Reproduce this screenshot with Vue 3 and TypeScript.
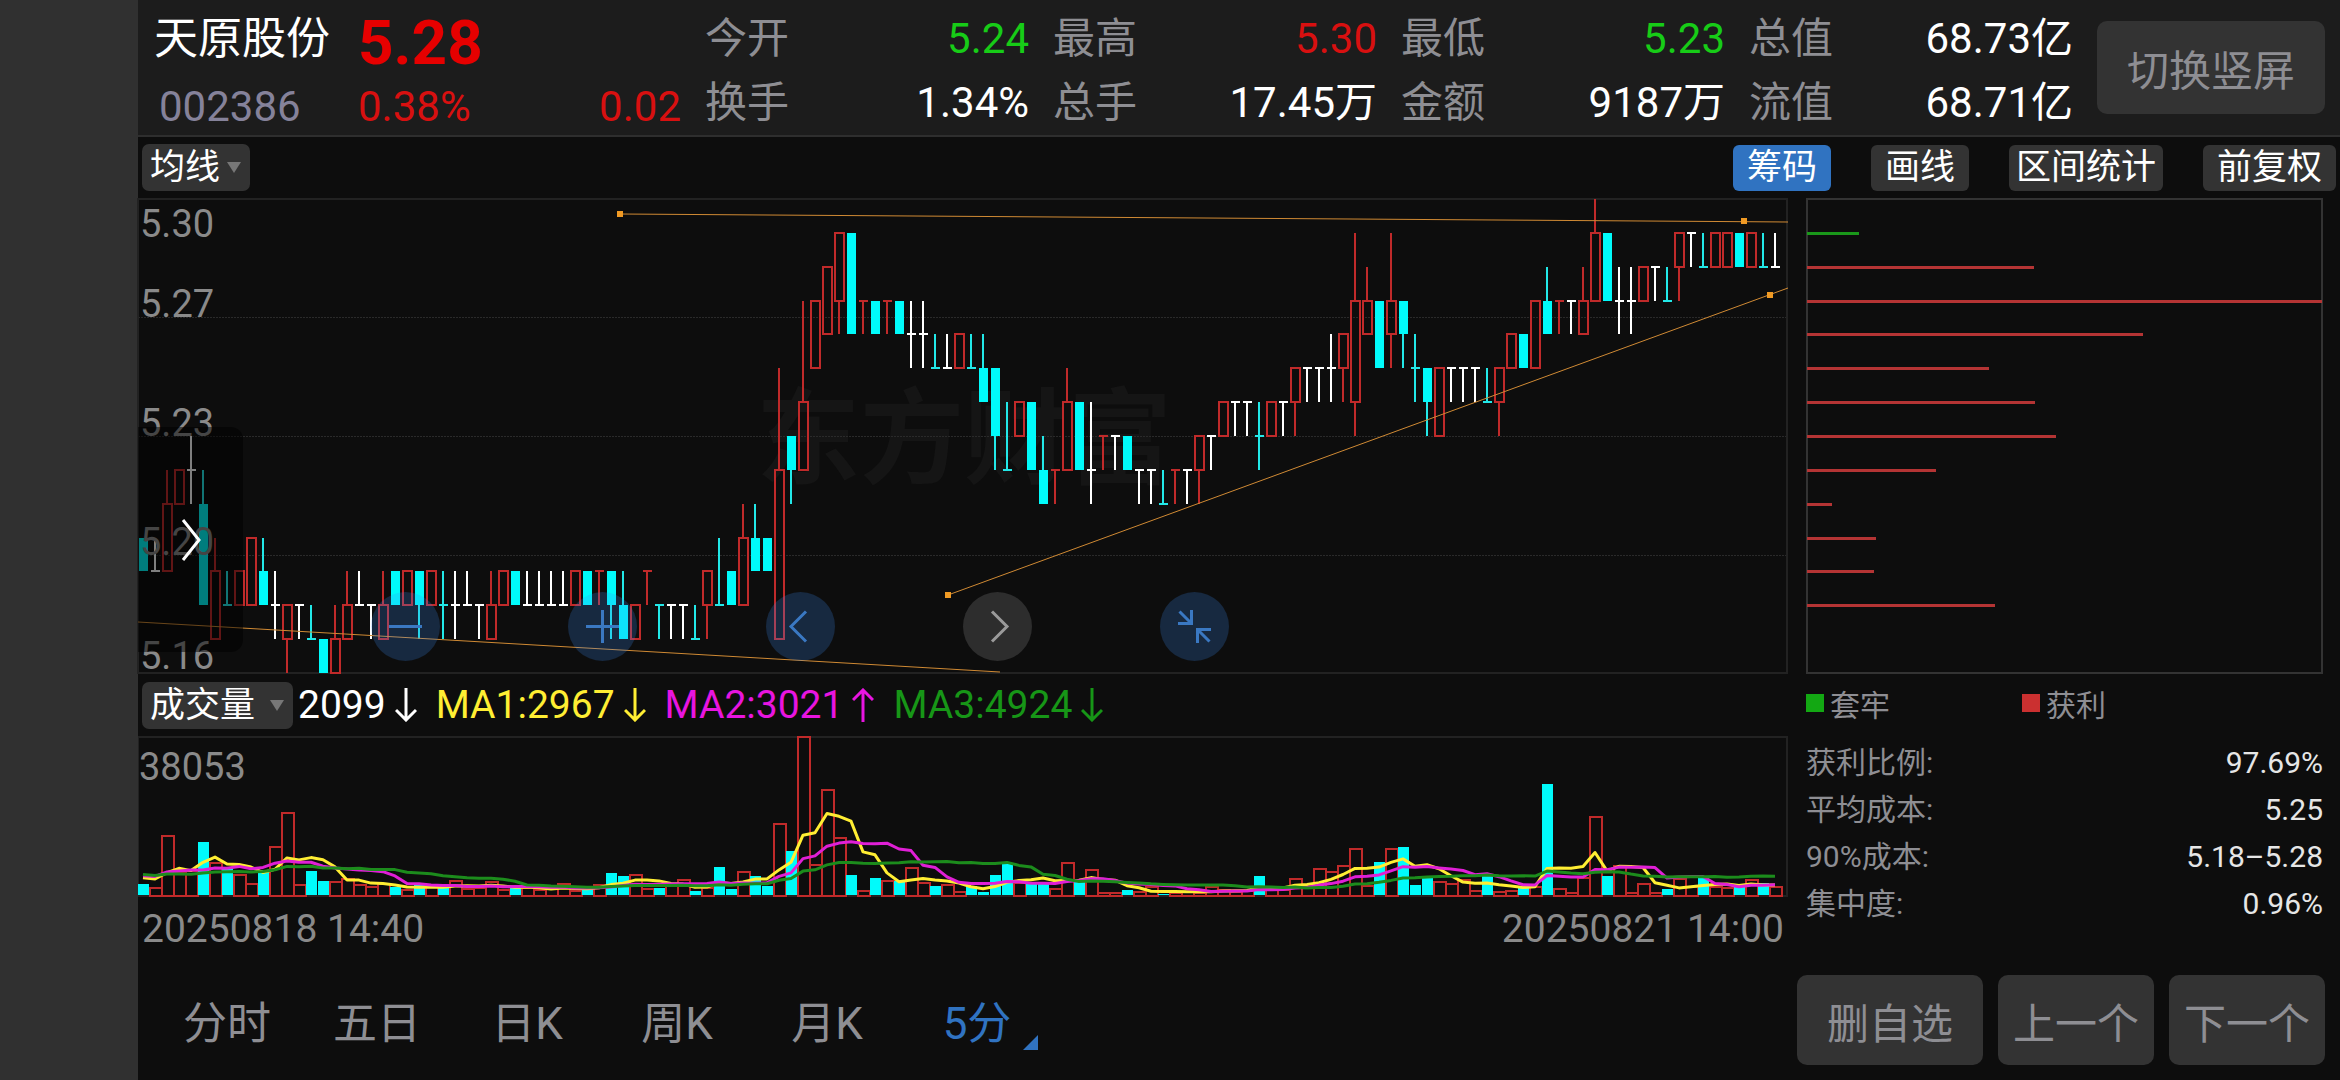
<script setup lang="ts">
import { computed, onBeforeUnmount, onMounted, ref } from 'vue'

type Tone = 'up' | 'down' | 'flat'

interface Stat {
  label: string
  value: string
  tone: Tone
}

const stats: Stat[] = [
  { label: '今开', value: '5.24', tone: 'down' },
  { label: '最高', value: '5.30', tone: 'up' },
  { label: '最低', value: '5.23', tone: 'down' },
  { label: '总值', value: '68.73亿', tone: 'flat' },
  { label: '换手', value: '1.34%', tone: 'flat' },
  { label: '总手', value: '17.45万', tone: 'flat' },
  { label: '金额', value: '9187万', tone: 'flat' },
  { label: '流值', value: '68.71亿', tone: 'flat' },
]

const averages = [
  { text: '2099', dir: 'down', color: '#ffffff' },
  { text: 'MA1:2967', dir: 'down', color: '#ffee33' },
  { text: 'MA2:3021', dir: 'up', color: '#e815e0' },
  { text: 'MA3:4924', dir: 'down', color: '#179617' },
]

const costs = [
  { label: '获利比例:', value: '97.69%' },
  { label: '平均成本:', value: '5.25' },
  { label: '90%成本:', value: '5.18–5.28' },
  { label: '集中度:', value: '0.96%' },
]

const tabs = ['分时', '五日', '日K', '周K', '月K', '5分']
const activeTab = ref('5分')

/*
 * One candle per word: r = rising, c = falling, w = unchanged, followed by
 * body top, body bottom, high and low, each as a hex digit counting
 * hundredths below 5.30.
 */
const candleWords: string[] = [
  'cabab', 'wbbab', 'r9b8b', 'r8989', 'w8879', 'c9c8c', 'rbdad', 'cccbc', 'rbcbc', 'racac',
  'cbcac', 'wccbd', 'rcdce', 'wcccd', 'cddcd', 'cdede', 'rdece', 'rcdbd', 'wccbc', 'wcccd',
  'rcdbd', 'cbcbc', 'rbcbc', 'cbcbd', 'rbcbc', 'cccbd', 'wccbd', 'wccbc', 'wcccd', 'rcdbd',
  'rbcbc', 'cbcbc', 'wccbc', 'wccbc', 'wccbc', 'wccbc', 'rbcbc', 'cbcbc', 'rbbbc', 'cbcbd',
  'ccdbd', 'rcdcd', 'rbbbc', 'ccccd', 'wcccd', 'wcccd', 'cddcd', 'rbcbd', 'cccac', 'cbcbc',
  'rac9c', 'cab9b', 'cabab', 'r8d5d', 'c7879', 'r6838', 'r3535', 'r2424', 'r1314', 'c1414',
  'r3334', 'c3434', 'r3334', 'c3434', 'w4435', 'w4435', 'c5545', 'w5545', 'r4545', 'c5545',
  'c5646', 'c5758', 'c8868', 'r6767', 'c6868', 'c8979', 'r8889', 'r6858', 'c6868', 'w8869',
  'r7778', 'w7778', 'c7878', 'w8889', 'w8889', 'c9989', 'r8889', 'w8889', 'r7879', 'w7778',
  'r6767', 'w6667', 'w6667', 'c7768', 'r6767', 'w6667', 'r5657', 'w5556', 'w5556', 'w5546',
  'r4546', 'r3617', 'r3424', 'c3535', 'r3415', 'c3435', 'c5546', 'c5657', 'r5757', 'w5556',
  'w5556', 'w5556', 'c6656', 'r5657', 'r4545', 'c4545', 'r3535', 'c3424', 'r3334', 'w3334',
  'r3424', 'r1303', 'c1313', 'w3324', 'w3324', 'r2323', 'w2223', 'c3323', 'r1213', 'w1112',
  'c2212', 'r1212', 'r1212', 'c1212', 'r1212', 'c2212', 'w2212',
]

/* Volume of each bar in units of 80 lots; the first block precedes the visible range. */
const earlierVolumes = [81, 81, 81, 81, 82, 54, 54, 55, 55, 54, 45, 45, 45, 46, 153, 43, 85, 5, 109]
const volumes = [
  33, 23, 180, 70, 75, 158, 100, 77, 63, 37, 75, 148, 248, 33, 72, 42, 42, 50, 32, 27,
  35, 23, 17, 30, 30, 30, 45, 20, 25, 42, 18, 25, 23, 17, 20, 37, 15, 20, 32, 67,
  57, 62, 20, 20, 30, 47, 13, 25, 83, 18, 71, 57, 28, 217, 133, 477, 93, 317, 175, 61,
  15, 50, 46, 43, 85, 38, 28, 33, 11, 28, 10, 61, 95, 38, 39, 37, 20, 98, 42, 79,
  10, 8, 15, 11, 28, 4, 8, 13, 10, 28, 18, 11, 15, 58, 20, 18, 50, 28, 82, 71,
  91, 142, 31, 99, 141, 144, 31, 53, 41, 35, 48, 15, 58, 13, 15, 26, 28, 332, 21, 10,
  53, 236, 56, 91, 8, 37, 8, 17, 52, 26, 53, 26, 23, 30, 49, 36, 27,
]
const PEAK = 477

const SLOTS = 137.5
const BASE_WIDTH = 1650
const STEP = 474 / 14

const plot = ref<HTMLElement | null>(null)
const plotWidth = ref(BASE_WIDTH)
let observer: ResizeObserver | undefined

onMounted(() => {
  const el = plot.value
  if (!el) return
  plotWidth.value = el.clientWidth
  observer = new ResizeObserver(() => {
    plotWidth.value = el.clientWidth
  })
  observer.observe(el)
})
onBeforeUnmount(() => observer?.disconnect())

const slot = computed(() => plotWidth.value / SLOTS)
const centre = (i: number): number => Math.round(5 + slot.value * i)
const level = (digit: string): number => Math.round(1 + parseInt(digit, 16) * STEP)
const sx = (x: number): number => (x * plotWidth.value) / BASE_WIDTH

const kinds: Record<string, Tone> = { r: 'up', c: 'down', w: 'flat' }

const candles = computed(() =>
  candleWords.map((word, i) => ({
    x: centre(i),
    tone: kinds[word[0]],
    top: level(word[1]),
    bottom: level(word[2]),
    high: level(word[3]),
    low: level(word[4]),
  })),
)

const bars = computed(() =>
  volumes.map((v, i) => ({
    x: centre(i),
    falling: candleWords[i][0] === 'c',
    h: Math.round((v / PEAK) * 159),
  })),
)

function averageLine(period: number): string {
  const all = [...earlierVolumes, ...volumes]
  return volumes
    .map((_, i) => {
      const end = i + earlierVolumes.length + 1
      const sum = all.slice(end - period, end).reduce((a, b) => a + b, 0)
      const y = 160 - (sum / period / PEAK) * 159
      return `${centre(i)},${y.toFixed(1)}`
    })
    .join(' ')
}

const maLines = computed(() => [
  { color: '#ffee33', points: averageLine(5) },
  { color: '#e01fd6', points: averageLine(10) },
  { color: '#1c8c1c', points: averageLine(20) },
])

const priceLabels = [
  { text: '5.30', y: 39 },
  { text: '5.27', y: 119 },
  { text: '5.23', y: 238 },
  { text: '5.20', y: 357 },
  { text: '5.16', y: 471 },
]
const gridRows = [119, 238, 357]

const trends = [
  { x1: 482, y1: 16, x2: 1650, y2: 24 },
  { x1: 810, y1: 397, x2: 1650, y2: 90 },
  { x1: 0, y1: 424, x2: 862, y2: 474 },
]
const handles = [
  { x: 482, y: 16 },
  { x: 1606, y: 23 },
  { x: 810, y: 397 },
  { x: 1632, y: 97 },
]

/* Chip distribution from 5.29 downwards, the widest row being 515. */
const chips = [52, 227, 515, 336, 182, 228, 249, 129, 25, 69, 67, 188]
const chipRows = chips.map((chip, i) => ({
  y: Math.round(1 + (i + 1) * STEP) - 1,
  width: `${(chip / 517) * 100}%`,
  trapped: i === 0,
}))
</script>

<template>
  <div class="screen">
    <aside class="notch"></aside>
    <div class="app">
      <header class="quote">
        <div class="identity">
          <h1 class="name">天原股份</h1>
          <strong class="price">5.28</strong>
          <span class="code">002386</span>
          <div class="change"><span>0.38%</span><span>0.02</span></div>
        </div>
        <dl class="stats">
          <div v-for="s in stats" :key="s.label" class="stat">
            <dt>{{ s.label }}</dt>
            <dd :class="s.tone">{{ s.value }}</dd>
          </div>
        </dl>
        <button type="button" class="rotate">切换竖屏</button>
      </header>

      <nav class="toolbar">
        <span class="picker">
          <select class="select average" aria-label="主图指标"><option>均线</option></select>
        </span>
        <div class="tools">
          <button type="button" class="tool active">筹码</button>
          <button type="button" class="tool">画线</button>
          <button type="button" class="tool long">区间统计</button>
          <button type="button" class="tool">前复权</button>
        </div>
      </nav>

      <main class="board">
        <section class="charts">
          <div ref="plot" class="plot">
            <svg class="price-chart" role="img" aria-label="5分钟K线">
              <text class="watermark" :x="sx(826)" y="278" text-anchor="middle">东方财富</text>
              <line
                v-for="y in gridRows"
                :key="y"
                class="grid"
                x1="0"
                :x2="plotWidth"
                :y1="y + 0.5"
                :y2="y + 0.5"
              />
              <rect class="frame" x="0" y="1" :width="plotWidth - 1" height="474" />
              <g v-for="(c, i) in candles" :key="i" :class="['candle', c.tone]">
                <template v-if="c.top === c.bottom">
                  <rect :x="c.x - 1" :y="c.high" width="2" :height="c.low - c.high" />
                  <rect :x="c.x - 4" :y="c.top - 1" width="9" height="2" />
                </template>
                <template v-else>
                  <rect :x="c.x - 1" :y="c.high" width="2" :height="c.top - c.high" />
                  <rect :x="c.x - 1" :y="c.bottom" width="2" :height="c.low - c.bottom" />
                  <rect
                    :class="c.tone === 'down' ? 'solid' : 'hollow'"
                    :x="c.x - 4"
                    :y="c.top"
                    width="9"
                    :height="c.bottom - c.top"
                  />
                </template>
              </g>
              <line
                v-for="(t, i) in trends"
                :key="'t' + i"
                class="trend"
                :x1="sx(t.x1)"
                :y1="t.y1"
                :x2="sx(t.x2)"
                :y2="t.y2"
              />
              <rect
                v-for="(h, i) in handles"
                :key="'h' + i"
                class="handle"
                :x="sx(h.x) - 3"
                :y="h.y - 3"
                width="6"
                height="6"
              />
              <text v-for="p in priceLabels" :key="p.text" class="axis" x="2" :y="p.y">{{ p.text }}</text>
            </svg>

            <button type="button" class="drawer" aria-label="展开">
              <svg width="20" height="44" viewBox="0 0 20 44"><path d="M2 2 18 22 2 42" /></svg>
            </button>

            <div class="controls">
              <button type="button" aria-label="缩小">
                <svg viewBox="0 0 69 69"><path d="M18 34.5H51" /></svg>
              </button>
              <button type="button" aria-label="放大">
                <svg viewBox="0 0 69 69"><path d="M18 34.5H51M34.5 18V51" /></svg>
              </button>
              <button type="button" aria-label="前移">
                <svg viewBox="0 0 69 69"><path d="M40 19.500 25 34.500 40 49.500" /></svg>
              </button>
              <button type="button" class="off" aria-label="后移">
                <svg viewBox="0 0 69 69"><path d="M29 19.500 44 34.500 29 49.500" /></svg>
              </button>
              <button type="button" aria-label="退出全屏">
                <svg viewBox="0 0 69 69">
                  <path d="M19.500 19.500 31 31M31.500 18V31.500H18M49.500 49.500 38 38M37.500 51V37.500H51" />
                </svg>
              </button>
            </div>
          </div>

          <div class="volume-head">
            <span class="picker">
              <select class="select volume" aria-label="副图指标"><option>成交量</option></select>
            </span>
            <span v-for="a in averages" :key="a.text" class="reading" :style="{ color: a.color }">
              {{ a.text }}
              <svg width="22" height="34" viewBox="0 0 22 34">
                <path v-if="a.dir === 'down'" d="M11 0V32M1 22 11 32 21 22" />
                <path v-else d="M11 34V2M1 12 11 2 21 12" />
              </svg>
            </span>
          </div>

          <svg class="volume-chart" role="img" aria-label="成交量">
            <rect class="frame" x="0" y="1" :width="plotWidth - 1" height="159" />
            <text class="axis" x="1" y="44">38053</text>
            <template v-for="(b, i) in bars" :key="i">
              <rect v-if="b.falling" class="bar-down" :x="b.x - 5" :y="159 - b.h" width="11" :height="b.h" />
              <rect v-else class="bar-up" :x="b.x - 5" :y="160 - b.h" width="12" :height="b.h" />
            </template>
            <polyline v-for="m in maLines" :key="m.color" class="ma" :points="m.points" :stroke="m.color" />
          </svg>

          <div class="dates"><time>20250818 14:40</time><time>20250821 14:00</time></div>
        </section>

        <section class="distribution">
          <svg class="chip-chart" role="img" aria-label="筹码分布">
            <rect class="chip-frame" x="1" y="1" width="515" height="474" />
            <rect
              v-for="r in chipRows"
              :key="r.y"
              x="1"
              :y="r.y"
              :width="r.width"
              height="3"
              :class="r.trapped ? 'chip-trapped' : 'chip-profit'"
            />
          </svg>
          <div class="legend">
            <span class="key trapped">套牢</span>
            <span class="key profit">获利</span>
          </div>
          <dl class="costs">
            <div v-for="c in costs" :key="c.label">
              <dt>{{ c.label }}</dt>
              <dd>{{ c.value }}</dd>
            </div>
          </dl>
        </section>
      </main>

      <footer class="footer">
        <nav class="periods">
          <button
            v-for="t in tabs"
            :key="t"
            type="button"
            :class="{ active: t === activeTab }"
            @click="activeTab = t"
          >
            {{ t }}
          </button>
        </nav>
        <div class="actions">
          <button type="button" class="wide">删自选</button>
          <button type="button">上一个</button>
          <button type="button">下一个</button>
        </div>
      </footer>
    </div>
  </div>
</template>

<style>
body {
  background: #0d0d0d;
}
</style>

<style scoped>
.screen {
  display: flex;
  min-height: 100vh;
  background: #0d0d0d;
  color: #fff;
  font-family: Roboto, 'Noto Sans CJK SC', sans-serif;
}

.screen * {
  box-sizing: border-box;
}

button,
select {
  margin: 0;
  padding: 0;
  border: 0;
  background: none;
  color: inherit;
  font-family: inherit;
  cursor: pointer;
}

dl,
dd,
h1 {
  margin: 0;
}

.notch {
  flex: none;
  width: 138px;
  background: #303030;
}

.app {
  flex: 1;
  min-width: 0;
}

.quote {
  display: flex;
  align-items: center;
  gap: 24px;
  height: 137px;
  padding: 0 15px 0 16px;
  border-bottom: 2px solid #2e2e2e;
  background: #1c1c1c;
  font-size: 42px;
  line-height: 64px;
}

.identity {
  display: grid;
  grid-template-columns: 204px 1fr;
  width: 527px;
  margin-top: 6px;
}

.name {
  font-size: 44px;
  font-weight: 400;
}

.price {
  height: 64px;
  color: #e60000;
  font-size: 62px;
  font-weight: 700;
  line-height: 72px;
}

.code {
  height: 64px;
  padding-left: 5px;
  color: #85829a;
  line-height: 72px;
}

.change {
  display: flex;
  justify-content: space-between;
  height: 64px;
  color: #d81010;
  line-height: 72px;
}

.stats {
  display: grid;
  flex: 1;
  grid-template-columns: repeat(4, 1fr);
  column-gap: 24px;
  margin-top: 6px;
}

.stat {
  display: flex;
  justify-content: space-between;
}

.stat dt {
  color: #8e8e93;
}

dd.up {
  color: #d81010;
}

dd.down {
  color: #17cc17;
}

.rotate {
  width: 228px;
  height: 93px;
  border-radius: 10px;
  background: #333;
  color: #8e8e93;
  font-size: 42px;
}

.toolbar {
  display: flex;
  align-items: center;
  justify-content: space-between;
  height: 61px;
  padding: 0 4px;
}

.picker {
  position: relative;
}

.picker::after {
  content: '';
  position: absolute;
  top: 18px;
  right: 9px;
  border: 7px solid transparent;
  border-top: 11px solid #777;
  border-bottom: 0;
  pointer-events: none;
}

.select {
  display: block;
  height: 47px;
  padding: 0 8px;
  border-radius: 7px;
  background: #333;
  color: #fff;
  font-size: 35px;
  appearance: none;
}

.average {
  width: 108px;
}

.volume {
  width: 151px;
}

.tools {
  display: flex;
  gap: 40px;
}

.tool {
  height: 46px;
  padding: 0 14px;
  border-radius: 6px;
  background: #333;
  color: #fff;
  font-size: 35px;
  line-height: 46px;
}

.tool.long {
  padding: 0 7px;
}

.tool.active {
  background: #3073c1;
}

.board {
  display: grid;
  grid-template-columns: minmax(0, 1fr) 517px;
  column-gap: 18px;
  padding-right: 17px;
}

.plot {
  position: relative;
}

.price-chart,
.chip-chart {
  display: block;
  width: 100%;
  height: 476px;
}

.price-chart {
  overflow: visible;
}

.volume-chart {
  display: block;
  width: 100%;
  height: 162px;
}

.frame {
  fill: none;
  stroke: #222;
  stroke-width: 2;
}

.grid {
  stroke: #2a2a2a;
  stroke-dasharray: 2 1;
}

.watermark {
  fill: #151515;
  font-size: 104px;
  font-weight: 700;
}

.axis {
  fill: #8a8a8a;
  font-size: 38px;
}

.candle.up {
  fill: #c02a2a;
}

.candle.down {
  fill: #22e8e8;
}

.candle.flat {
  fill: #fff;
}

.candle .solid {
  fill: #00fbfb;
}

.candle .hollow {
  fill: none;
  stroke: #c02a2a;
  stroke-width: 2;
}

.trend {
  stroke: #d08a34;
}

.handle {
  fill: #f09a24;
}

.bar-down {
  fill: #00fbfb;
}

.bar-up {
  fill: none;
  stroke: #c02a2a;
  stroke-width: 2;
}

.ma {
  fill: none;
  stroke-width: 3;
  stroke-linejoin: round;
}

.drawer {
  position: absolute;
  top: 229px;
  left: 0;
  width: 105px;
  height: 225px;
  border-radius: 0 12px 12px 0;
  background: rgba(0, 0, 0, 0.5);
}

.drawer svg {
  display: block;
  margin: 0 auto;
  fill: none;
  stroke: #fff;
  stroke-width: 3;
}

.controls {
  position: absolute;
  bottom: 13px;
  left: 233px;
  display: flex;
  justify-content: space-between;
  width: 52%;
}

.controls button {
  width: 69px;
  height: 69px;
  border-radius: 50%;
  background: rgba(60, 140, 245, 0.22);
}

.controls svg {
  display: block;
  fill: none;
  stroke: #3a78c2;
  stroke-width: 3;
}

.controls .off {
  background: #2d2d2d;
}

.controls .off svg {
  stroke: #9a9a9a;
}

.volume-head {
  display: flex;
  align-items: center;
  gap: 19px;
  height: 62px;
  padding-left: 4px;
  font-size: 39px;
}

.volume-head .picker {
  margin-right: -14px;
}

.reading {
  display: flex;
  align-items: center;
  gap: 9px;
}

.reading svg {
  fill: none;
  stroke: currentColor;
  stroke-width: 3;
}

.dates {
  display: flex;
  justify-content: space-between;
  padding: 0 4px;
  color: #8a8a8a;
  font-size: 39px;
  line-height: 62px;
}

.chip-frame {
  fill: none;
  stroke: #333;
  stroke-width: 2;
}

.chip-trapped {
  fill: #1a981a;
}

.chip-profit {
  fill: #b43434;
}

.legend {
  display: grid;
  grid-template-columns: 216px 1fr;
  height: 57px;
  margin-bottom: 8px;
  color: #8e8e93;
  font-size: 30px;
}

.key {
  display: flex;
  align-items: center;
  gap: 6px;
}

.key::before {
  content: '';
  width: 18px;
  height: 18px;
}

.trapped::before {
  background: #13a813;
}

.profit::before {
  background: #cb3030;
}

.costs {
  font-size: 30px;
  line-height: 47px;
}

.costs div {
  display: flex;
  justify-content: space-between;
}

.costs dt {
  color: #8e8e93;
}

.costs dd {
  color: #e6e6e6;
}

.footer {
  display: flex;
  align-items: center;
  justify-content: space-between;
  height: 120px;
  padding: 0 15px 0 14px;
}

.periods,
.actions {
  display: flex;
}

.periods button {
  position: relative;
  width: 150px;
  height: 80px;
  color: #8e8e93;
  font-size: 44px;
}

.periods .active {
  color: #3073c1;
}

.periods .active::after {
  content: '';
  position: absolute;
  right: 14px;
  bottom: 10px;
  border-bottom: 15px solid #3073c1;
  border-left: 15px solid transparent;
}

.actions {
  gap: 15px;
}

.actions button {
  width: 156px;
  height: 90px;
  border-radius: 10px;
  background: #333;
  color: #8e8e93;
  font-size: 42px;
}

.actions .wide {
  width: 186px;
}
</style>
